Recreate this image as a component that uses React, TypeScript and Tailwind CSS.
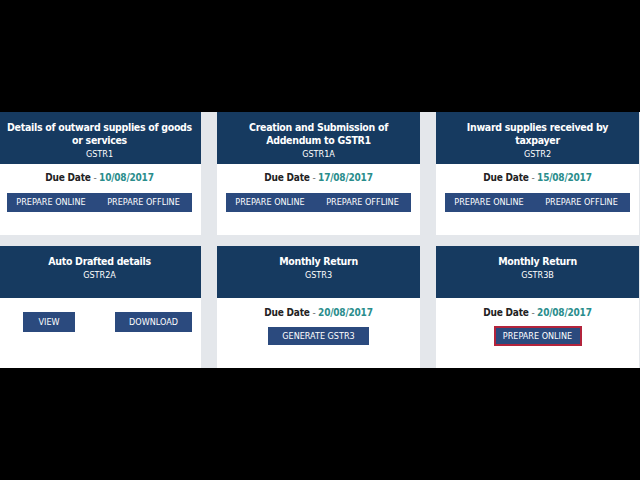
import React from "react";

const FONT = "font-['DejaVu_Sans_Condensed','DejaVu_Sans',sans-serif]";

function Header({ title, code }: { title: string[]; code: string }) {
  return (
    <div className="h-[52px] bg-[#163a60] pt-[9px] text-center text-white">
      {title.map((t) => (
        <div key={t} className="whitespace-nowrap text-[10.5px] font-bold leading-[13px] tracking-[-0.3px]">
          {t}
        </div>
      ))}
      <div className="mt-[1px] text-[9px] leading-[12px]">{code}</div>
    </div>
  );
}

function DueDate({ date }: { date: string }) {
  return (
    <div className="whitespace-nowrap text-center text-[10px] font-bold leading-[12px] tracking-[-0.2px]">
      <span className="text-[#222]">Due Date</span>
      <span className="font-normal text-[#777]"> - </span>
      <span className="text-[#2a8d8c]"> {date}</span>
    </div>
  );
}

function Btn({ children, className = "" }: { children: React.ReactNode; className?: string }) {
  return (
    <div
      className={`flex items-center justify-center whitespace-nowrap bg-[#2b4a7e] text-[9px] leading-none text-white ${className}`}
    >
      {children}
    </div>
  );
}

function PairCard({ title, code, date }: { title: string[]; code: string; date: string }) {
  return (
    <div className="flex h-[123px] flex-col bg-white">
      <Header title={title} code={code} />
      <div className="pt-[8px]">
        <DueDate date={date} />
        <div className="ml-[9px] mt-[9px] flex h-[19px] w-[185px]">
          <Btn className="w-[88px]">PREPARE ONLINE</Btn>
          <Btn className="w-[97px]">PREPARE OFFLINE</Btn>
        </div>
      </div>
    </div>
  );
}

export default function App() {
  return (
    <div className={`flex h-[480px] w-[640px] flex-col bg-black ${FONT}`}>
      <div className="h-[112px] shrink-0" />
      <div className="h-[256px] shrink-0 overflow-hidden bg-[#e4e7eb]">
        <div className="-ml-[2px] grid grid-cols-[203px_203px_203px] gap-x-[16px] gap-y-[11px]">
          <PairCard
            title={["Details of outward supplies of goods", "or services"]}
            code="GSTR1"
            date="10/08/2017"
          />
          <PairCard
            title={["Creation and Submission of", "Addendum to GSTR1"]}
            code="GSTR1A"
            date="17/08/2017"
          />
          <PairCard
            title={["Inward supplies received by", "taxpayer"]}
            code="GSTR2"
            date="15/08/2017"
          />

          <div className="h-[130px] bg-white">
            <Header title={["Auto Drafted details"]} code="GSTR2A" />
            <div className="flex pl-[25px] pt-[14px]">
              <Btn className="h-[20px] w-[52px]">VIEW</Btn>
              <Btn className="ml-[40px] h-[20px] w-[77px]">DOWNLOAD</Btn>
            </div>
          </div>

          <div className="h-[130px] bg-white">
            <Header title={["Monthly Return"]} code="GSTR3" />
            <div className="flex flex-col items-center pt-[9px]">
              <DueDate date="20/08/2017" />
              <Btn className="mt-[8px] h-[18px] w-[101px]">GENERATE GSTR3</Btn>
            </div>
          </div>

          <div className="h-[130px] bg-white">
            <Header title={["Monthly Return"]} code="GSTR3B" />
            <div className="flex flex-col items-center pt-[9px]">
              <DueDate date="20/08/2017" />
              <Btn className="mt-[7px] h-[20px] w-[88px] border-2 border-[#b3243c]">
                PREPARE ONLINE
              </Btn>
            </div>
          </div>
        </div>
      </div>
      <div className="flex-1" />
    </div>
  );
}
